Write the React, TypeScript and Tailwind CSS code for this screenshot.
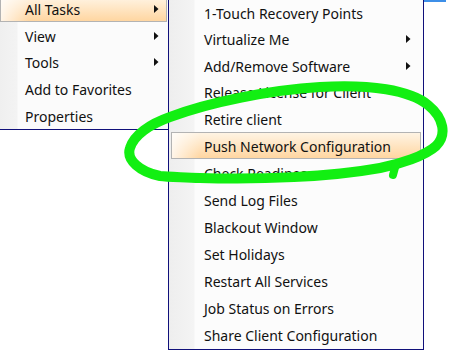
type Item = { label: string; h: number; sub?: boolean; hot?: boolean }

const leftItems: Item[] = [
  { label: 'All Tasks', h: 26, sub: true, hot: true },
  { label: 'View', h: 27, sub: true },
  { label: 'Tools', h: 26, sub: true },
  { label: 'Add to Favorites', h: 27 },
  { label: 'Properties', h: 27 },
]

const taskItems: Item[] = [
  { label: '1-Touch Recovery Points', h: 27 },
  { label: 'Virtualize Me', h: 26, sub: true },
  { label: 'Add/Remove Software', h: 27, sub: true },
  { label: 'Release License for Client', h: 26 },
  { label: 'Retire client', h: 27 },
  { label: 'Push Network Configuration', h: 27, hot: true },
  { label: 'Check Readiness', h: 27 },
  { label: 'Send Log Files', h: 27 },
  { label: 'Blackout Window', h: 27 },
  { label: 'Set Holidays', h: 27 },
  { label: 'Restart All Services', h: 27 },
  { label: 'Job Status on Errors', h: 27 },
  { label: 'Share Client Configuration', h: 27 },
]

function Arrow() {
  return (
    <svg width="5" height="8" viewBox="0 0 5 8" className="shrink-0">
      <polygon points="0,0 4.5,4 0,8" fill="#111" />
    </svg>
  )
}

function MenuRow({ item, textPad, arrowPad }: { item: Item; textPad: string; arrowPad: string }) {
  return (
    <div
      className={
        item.hot
          ? 'flex items-center border border-[#b3b3b3] bg-[linear-gradient(to_right,rgba(255,255,255,0.75),rgba(255,255,255,0)_28px),linear-gradient(to_bottom,#fff4e4,#ffd6a1)]'
          : 'flex items-center border border-transparent'
      }
      style={{ height: item.h }}
    >
      <span className={`flex-1 pt-[2px] text-[14px] text-[#111] ${textPad}`}>{item.label}</span>
      {item.sub && <span className={arrowPad}><Arrow /></span>}
    </div>
  )
}

export default function App() {
  return (
    <div className="relative w-[449px] h-[363px] overflow-hidden bg-white font-['Segoe_UI','Noto_Sans',sans-serif] leading-none select-none">
      {/* blue edge of the window behind */}
      <div className="absolute left-[424px] top-0 w-[22px] h-[2px] bg-[#3d8fe8]" />

      {/* context menu */}
      <div className="absolute left-0 top-[-4px] w-[169px] border-b border-[#10107a] bg-[linear-gradient(to_right,#efefef,#f3f3f3_17px,#fbfbfb_18px,#fbfbfb)]">
        {leftItems.map((it) => (
          <div key={it.label} className="mr-[2px]">
            <MenuRow item={it} textPad="pl-[24px]" arrowPad="pr-[7px]" />
          </div>
        ))}
      </div>

      {/* All Tasks submenu */}
      <div className="absolute left-[168px] top-[-4px] w-[256px] border border-[#10107a] pt-[2px] pb-[1px] bg-[linear-gradient(to_right,#eeeeee,#f4f4f4_25px,#fcfcfc_26px,#fcfcfc)]">
        {taskItems.map((it) => (
          <div key={it.label} className="mx-[2px]">
            <MenuRow item={it} textPad="pl-[32px]" arrowPad="pr-[9px]" />
          </div>
        ))}
      </div>

      {/* hand-drawn highlight ring */}
      <svg className="absolute inset-0 pointer-events-none" width="449" height="363" viewBox="0 0 449 363">
        <path
          d="M160 176 C140 172 126 160 130 148 C134 135 150 124 170 117 C210 102 270 90 320 87 C370 84 410 90 428 105 C444 118 447 135 436 146 C425 156 400 164 380 168 C330 177 260 180 200 178 C180 177 168 177 160 176 Z"
          fill="none"
          stroke="#12ef12"
          strokeWidth="10"
          strokeLinecap="round"
          strokeLinejoin="round"
        />
        <path d="M396 164 L393 175" stroke="#12ef12" strokeWidth="8" strokeLinecap="round" />
      </svg>
    </div>
  )
}
